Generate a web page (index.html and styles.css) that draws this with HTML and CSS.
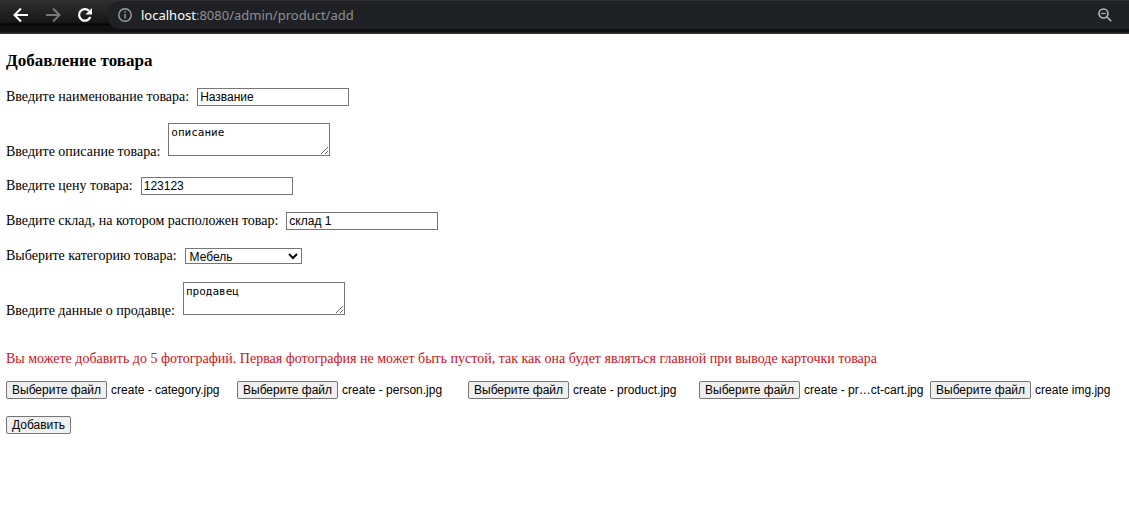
FILE: index.html
```html
<!DOCTYPE html>
<html lang="ru">
<head>
<meta charset="utf-8">
<title>Добавление товара</title>
<link rel="stylesheet" href="styles.css">
</head>
<body>
<header class="toolbar">
  <nav class="nav">
    <button class="icon-button" type="button" aria-label="Назад"><svg width="16" height="16" viewBox="0 0 16 16" fill="none" stroke="#fff" stroke-width="2"><path d="M15 8H2M8 1.5L1.5 8L8 14.500"/></svg></button>
    <button class="icon-button" type="button" aria-label="Вперёд"><svg width="16" height="16" viewBox="0 0 16 16" fill="none" stroke="#777" stroke-width="2"><path d="M1 8H14M8 1.500L14.500 8L8 14.500"/></svg></button>
    <button class="icon-button" type="button" aria-label="Обновить"><svg width="16" height="16" viewBox="0 0 16 16" fill="none"><path d="M13.300 10A5.800 5.800 0 1 1 12 3.800" stroke="#fff" stroke-width="2.200"/><path d="M15 1V7.500H8.500Z" fill="#fff"/></svg></button>
  </nav>
  <div class="address">
    <svg width="14" height="14" viewBox="0 0 14 14" fill="none" stroke="#9aa0a6" stroke-width="1.400"><circle cx="7" cy="7" r="6.200"/><path d="M7 6V10.500M7 3.300V4.800"/></svg>
    <span class="url"><span class="host">localhost</span>:8080/admin/product/add</span>
    <button class="icon-button zoom" type="button" aria-label="Масштаб"><svg width="14" height="14" viewBox="0 0 14 14" fill="none" stroke="#b4b6b9" stroke-width="1.600"><circle cx="5.500" cy="5.500" r="4.500"/><path d="M9 9L13.300 13.300"/><path d="M3.200 5.500H7.800" stroke-width="1.200"/></svg></button>
  </div>
</header>
<main class="page">
  <h3 class="title">Добавление товара</h3>
  <form class="form">
    <div class="row"><label for="name">Введите наименование товара:</label><input class="field" id="name" type="text" value="Название"></div>
    <div class="row row-area"><label for="description">Введите описание товара:</label><textarea class="area" id="description">описание</textarea></div>
    <div class="row"><label for="price">Введите цену товара:</label><input class="field" id="price" type="text" value="123123"></div>
    <div class="row"><label for="warehouse">Введите склад, на котором расположен товар:</label><input class="field" id="warehouse" type="text" value="склад 1"></div>
    <div class="row"><label for="category">Выберите категорию товара:</label><select class="select" id="category"><option>Мебель</option></select></div>
    <div class="row row-area"><label for="seller">Введите данные о продавце:</label><textarea class="area" id="seller">продавец</textarea></div>
    <p class="notice">Вы можете добавить до 5 фотографий. Первая фотография не может быть пустой, так как она будет являться главной при выводе карточки товара</p>
    <div class="files">
      <div class="file"><button class="button" type="button">Выберите файл</button><span>create - category.jpg</span></div>
      <div class="file"><button class="button" type="button">Выберите файл</button><span>create - person.jpg</span></div>
      <div class="file"><button class="button" type="button">Выберите файл</button><span>create - product.jpg</span></div>
      <div class="file"><button class="button" type="button">Выберите файл</button><span>create - pr…ct-cart.jpg</span></div>
      <div class="file"><button class="button" type="button">Выберите файл</button><span>create img.jpg</span></div>
    </div>
    <button class="button submit" type="submit">Добавить</button>
  </form>
</main>
</body>
</html>
```
FILE: styles.css
```css
* {
  box-sizing: border-box;
}

body {
  margin: 0;
  background: #fff;
  color: #000;
  font: 14px/18px "Liberation Serif", serif;
}

.toolbar {
  display: flex;
  align-items: flex-start;
  height: 34px;
  padding-top: 1px;
  background: linear-gradient(#303030, #161616 23px, #000 24px, #111 26px, #111 32px, #333 33px);
}

.nav {
  display: flex;
  gap: 16px;
  padding: 6px 14px 0 13px;
}

.icon-button {
  display: flex;
  padding: 0;
  border: 0;
  background: none;
}

.address {
  flex: 1;
  display: flex;
  align-items: center;
  height: 28px;
  padding: 0 17px 0 11px;
  border-radius: 14px 0 0 14px;
  background: #202124;
}

.url {
  margin-left: 9px;
  color: #8d9093;
  font: 13px/20px "Noto Sans", "Open Sans", sans-serif;
}

.host {
  color: #fff;
}

.zoom {
  margin-left: auto;
}

.page {
  padding: 18px 6px;
}

.title {
  margin: 0 0 18px;
  font-size: 17px;
  line-height: 18px;
}

.form {
  display: flex;
  flex-direction: column;
  align-items: flex-start;
  gap: 17px;
}

.row {
  display: flex;
  align-items: center;
  gap: 8px;
  min-height: 18px;
}

.row-area {
  align-items: flex-end;
  line-height: 16px;
}

.field,
.area,
.select {
  margin: 0;
  border: 1px solid #767676;
  border-radius: 0;
  background: #fff;
  color: #000;
}

.field {
  width: 152px;
  height: 18px;
  padding: 0 2px;
  font: 12px/16px "Liberation Sans", sans-serif;
}

.area {
  width: 162px;
  height: 33px;
  margin-bottom: 4px;
  padding: 2px;
  font: 11px/14px "DejaVu Sans Mono", monospace;
}

.select {
  width: 117px;
  height: 16px;
  padding: 0;
  font: 12px/14px "Liberation Sans", sans-serif;
}

.notice {
  margin: 14px 0 -4px;
  color: #d01018;
}

.files {
  display: flex;
  flex-wrap: wrap;
  gap: 4px;
  font: 12px/18px "Liberation Sans", sans-serif;
}

.file {
  display: flex;
  gap: 4px;
  min-width: 227px;
  white-space: nowrap;
}

.file:last-child {
  min-width: 0;
}

.button {
  height: 18px;
  padding: 0 5px;
  border: 1px solid #767676;
  border-radius: 2px;
  background: #efefef;
  color: #000;
  font: 12px/16px "Liberation Sans", sans-serif;
}
```
